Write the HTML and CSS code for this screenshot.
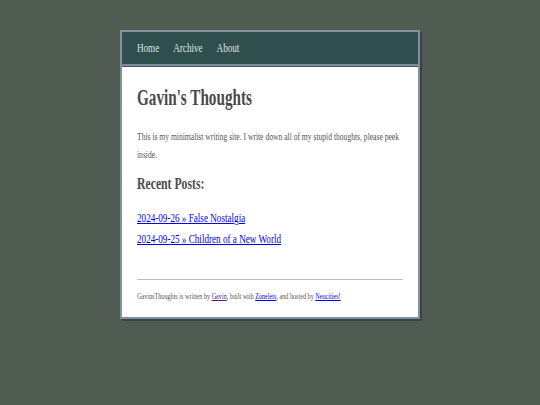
FILE: index.html
```html
<!DOCTYPE html>
<html lang="en">
<head>
<meta charset="utf-8">
<title>Gavin's Thoughts</title>
<link rel="stylesheet" href="styles.css">
</head>
<body>
<div class="card">
  <header class="nav">
    <nav class="squeeze nav-links">
      <a href="#">Home</a>
      <a href="#">Archive</a>
      <a href="#">About</a>
    </nav>
  </header>
  <main class="main">
    <h1 class="squeeze title">Gavin's Thoughts</h1>
    <p class="squeeze intro">This is my minimalist writing site. I write down all of my stupid thoughts, please peek inside.</p>
    <h2 class="squeeze recent">Recent Posts:</h2>
    <ul class="squeeze posts">
      <li><a href="#">2024-09-26 » False Nostalgia</a></li>
      <li><a href="#">2024-09-25 » Children of a New World</a></li>
    </ul>
    <hr class="rule">
    <footer class="squeeze foot">GavinsThoughts is written by <a class="visited" href="#">Gavin</a>, built with <a href="#">Zonelets</a>, and hosted by <a href="#">Neocities!</a></footer>
  </main>
</div>
</body>
</html>
```

FILE: styles.css
```css
html, body {
  margin: 0;
  padding: 0;
}
body {
  background: #505b51;
  font-family: "Liberation Serif", "Times New Roman", serif;
  height: 405px;
  overflow: hidden;
}
.card {
  width: 296px;
  margin: 30px auto 0;
  border: 2px solid #8390a0;
  box-shadow: 2px 2px 0 #3a4149;
  background: #fff;
}
.squeeze {
  --sx: 0.7;
  transform: scaleX(var(--sx));
  transform-origin: 0 0;
  width: calc(100% / var(--sx));
}
.nav {
  background: #2f4f4f;
  height: 32px;
  padding-left: 15px;
  border-bottom: 2px solid #7d8a98;
  box-shadow: 0 1px 0 #4a5561;
  display: flex;
  align-items: center;
}
.nav-links {
  display: flex;
  gap: 20px;
  font-size: 13px;
  line-height: 16px;
}
.nav-links a {
  color: #dde3e3;
  text-decoration: none;
}
.main {
  padding: 1px 15px 15px;
  margin-top: 1px;
}
.title {
  --sx: 0.66;
  margin: 17px 0 0;
  font-size: 23px;
  line-height: 26px;
  color: #4a4a4a;
  font-weight: bold;
}
.intro {
  --sx: 0.69;
  margin: 16px 0 0;
  font-size: 11px;
  line-height: 18px;
  color: #555;
}
.recent {
  --sx: 0.69;
  margin: 11px 0 0;
  font-size: 17px;
  line-height: 20px;
  color: #4a4a4a;
  font-weight: bold;
}
.posts {
  --sx: 0.73;
  list-style: none;
  margin: 14px 0 0;
  padding: 0;
  font-size: 12.5px;
  line-height: 21px;
}
.posts a {
  color: #0000ee;
}
.rule {
  margin: 29px 0 0;
  border: 0;
  border-top: 1px solid #bdbdbd;
  height: 0;
}
.foot {
  --sx: 0.685;
  margin-top: 10px;
  font-size: 9px;
  line-height: 12px;
  color: #555;
}
.foot a {
  color: #0000ee;
}
.foot a.visited {
  color: #551a8b;
}
```
